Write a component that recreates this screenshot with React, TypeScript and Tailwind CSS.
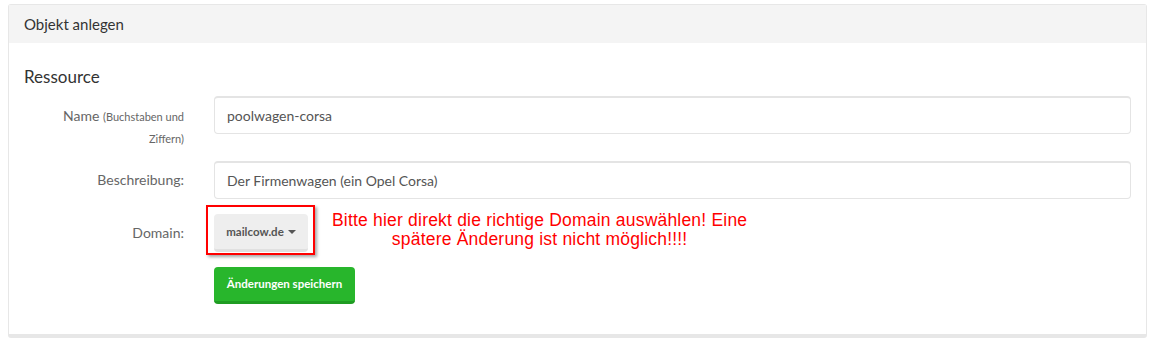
export default function App() {
  return (
    <div className="min-h-screen bg-white pt-[4px] pl-[8px] pr-[9px] font-['Lato','Noto_Sans',sans-serif]">
      <div className="rounded-[3px] border border-[#e7e7e7] border-b-[4px] bg-white">
        {/* Header */}
        <div className="flex h-[38px] items-center bg-[#f4f4f4] px-[15px] text-[15px] text-[#333]">
          Objekt anlegen
        </div>

        {/* Body */}
        <div className="px-[15px] pb-[30px] pt-[22px]">
          <h3 className="text-[17px] leading-[24px] text-[#333]">Ressource</h3>

          {/* Name */}
          <div className="mt-[7px] flex">
            <div className="w-[190px] shrink-0 pr-[30px] pt-[9px] text-right text-[14px] leading-[21px] text-[#666]">
              Name <span className="text-[11px]">(Buchstaben und</span>
              <br />
              <span className="text-[11px]">Ziffern)</span>
            </div>
            <div className="h-[38px] flex-1 rounded-[4px] border border-[#e4e4e4] border-t-[2px] px-[12px] pt-[7px] text-[14px] text-[#555]">
              poolwagen-corsa
            </div>
          </div>

          {/* Beschreibung */}
          <div className="mt-[12px] flex">
            <div className="w-[190px] shrink-0 pr-[30px] pt-[8px] text-right text-[14px] leading-[21px] text-[#666]">
              Beschreibung:
            </div>
            <div className="h-[38px] flex-1 rounded-[4px] border border-[#e4e4e4] border-t-[2px] px-[12px] pt-[7px] text-[14px] text-[#555]">
              Der Firmenwagen (ein Opel Corsa)
            </div>
          </div>

          {/* Domain */}
          <div className="mt-[15px] flex">
            <div className="w-[190px] shrink-0 pr-[30px] pt-[8px] text-right text-[14px] leading-[21px] text-[#666]">
              Domain:
            </div>
            <div className="relative">
              <button className="flex h-[38px] w-[94px] items-center justify-center gap-[4px] rounded-[4px] border-b-[3px] border-[#e0e0e0] bg-[#eee] text-[11.5px] font-bold text-[#555]">
                mailcow.de
                <svg width="8" height="4" viewBox="0 0 8 4">
                  <path d="M0 0h8L4 4z" fill="#555" />
                </svg>
              </button>
              <div className="pointer-events-none absolute -left-[8px] -top-[9px] h-[50px] w-[109px] border-2 border-[#ff0000] shadow-[2px_2px_3px_rgba(0,0,0,0.35)]" />
            </div>
            <div className="ml-[24px] mt-[-3px] text-center font-['Liberation_Sans',Arial,sans-serif] text-[17.5px] leading-[19px] tracking-[0.2px] text-[#ff0000]">
              Bitte hier direkt die richtige Domain auswählen! Eine
              <br />
              spätere Änderung ist nicht möglich!!!!
            </div>
          </div>

          {/* Save */}
          <div className="mt-[15px] pl-[190px]">
            <button className="h-[37px] w-[141px] rounded-[4px] border-b-[3px] border-[#1f9c23] bg-[#28b62c] text-[11.5px] font-bold text-white">
              Änderungen speichern
            </button>
          </div>
        </div>
      </div>
    </div>
  );
}
